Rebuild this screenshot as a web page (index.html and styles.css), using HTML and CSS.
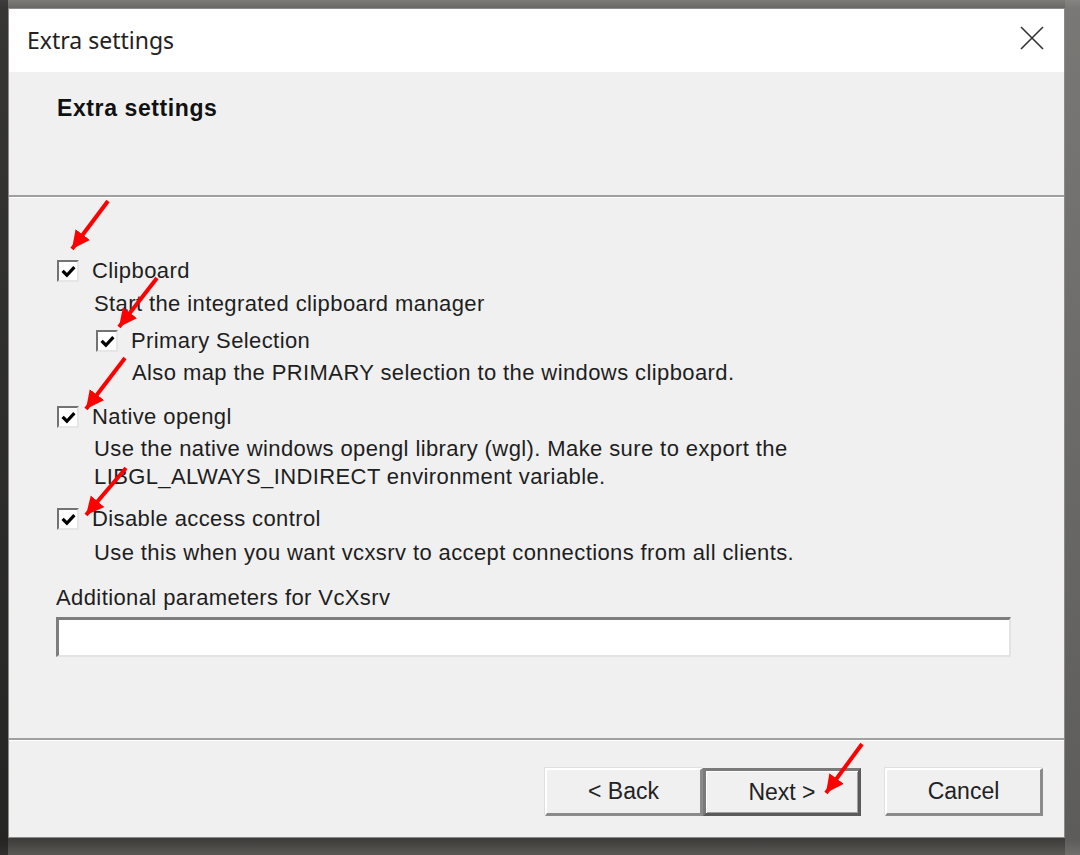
FILE: index.html
```html
<!DOCTYPE html>
<html>
<head>
<meta charset="utf-8">
<title>Extra settings</title>
<link rel="stylesheet" href="styles.css">
</head>
<body>
<div class="desktop">
  <div class="window">
    <div class="titlebar">
      <span class="title">Extra settings</span>
      <svg class="close" width="24" height="24" viewBox="0 0 24 24"><path d="M1 1 L23 23 M23 1 L1 23" stroke="#333" stroke-width="1.6" fill="none"/></svg>
    </div>
    <div class="header">
      <div class="header-title">Extra settings</div>
    </div>
    <div class="sep"></div>
    <div class="content">
      <div class="opt r1"><span class="cb"><svg viewBox="0 0 14 14" width="15" height="15"><path d="M1.5 6.5 L5.5 10.5 L12.5 3" stroke="#000" stroke-width="3" fill="none"/></svg></span><span>Clipboard</span></div>
      <div class="desc d1">Start the integrated clipboard manager</div>
      <div class="opt sub r2"><span class="cb"><svg viewBox="0 0 14 14" width="15" height="15"><path d="M1.5 6.5 L5.5 10.5 L12.5 3" stroke="#000" stroke-width="3" fill="none"/></svg></span><span>Primary Selection</span></div>
      <div class="desc sub2 d2">Also map the PRIMARY selection to the windows clipboard.</div>
      <div class="opt r3"><span class="cb"><svg viewBox="0 0 14 14" width="15" height="15"><path d="M1.5 6.5 L5.5 10.5 L12.5 3" stroke="#000" stroke-width="3" fill="none"/></svg></span><span>Native opengl</span></div>
      <div class="desc d3">Use the native windows opengl library (wgl). Make sure to export the<br>LIBGL_ALWAYS_INDIRECT environment variable.</div>
      <div class="opt r4"><span class="cb"><svg viewBox="0 0 14 14" width="15" height="15"><path d="M1.5 6.5 L5.5 10.5 L12.5 3" stroke="#000" stroke-width="3" fill="none"/></svg></span><span>Disable access control</span></div>
      <div class="desc d4">Use this when you want vcxsrv to accept connections from all clients.</div>
      <div class="field-label">Additional parameters for VcXsrv</div>
      <div class="field"></div>
    </div>
    <div class="sep"></div>
    <div class="footer">
      <div class="btn">&lt; Back</div>
      <div class="btn default">Next &gt;</div>
      <div class="btn cancel">Cancel</div>
    </div>
  </div>
  <svg class="arrows" width="1080" height="855" viewBox="0 0 1080 855">
    <defs>
      <marker id="ah" markerUnits="userSpaceOnUse" markerWidth="22" markerHeight="22" refX="18" refY="9" orient="auto">
        <path d="M0 0 L18 9 L0 18 Z" fill="#ff0000"/>
      </marker>
    </defs>
    <g stroke="#ff0000" stroke-width="4" fill="none">
      <line x1="108" y1="201" x2="72" y2="249" marker-end="url(#ah)"/>
      <line x1="157" y1="278" x2="119" y2="327" marker-end="url(#ah)"/>
      <line x1="125" y1="358" x2="86" y2="409" marker-end="url(#ah)"/>
      <line x1="126" y1="468" x2="86" y2="515" marker-end="url(#ah)"/>
      <line x1="862" y1="744" x2="826" y2="793" marker-end="url(#ah)"/>
    </g>
  </svg>
</div>
</body>
</html>
```

FILE: styles.css
```css
html, body {
  margin: 0;
  padding: 0;
}
body {
  width: 1080px;
  height: 855px;
  overflow: hidden;
  background: #4a4a4a;
}
.desktop {
  position: relative;
  width: 1080px;
  height: 855px;
  padding: 8px 0 0 8px;
  box-sizing: border-box;
  background:
    linear-gradient(90deg, rgba(20,20,20,0.6) 0px, rgba(20,20,20,0.6) 8px, transparent 8px, transparent 1065px, rgba(150,150,150,0.35) 1065px),
    linear-gradient(180deg, #7d7b78 0px, #6a6864 8px, #3e3d3b 840px, #5a5955 855px);
}
.window {
  width: 1057px;
  height: 830px;
  box-sizing: border-box;
  border: 1px solid #8a8a8a;
  background: #f0f0f0;
  display: flex;
  flex-direction: column;
  font-family: "Liberation Sans", Arial, sans-serif;
  color: #1e1e1e;
}
.titlebar {
  height: 63px;
  background: #ffffff;
  display: flex;
  align-items: center;
  justify-content: space-between;
  padding: 0 20px 0 18px;
  flex-shrink: 0;
}
.title {
  font-family: "Noto Sans", "Open Sans", sans-serif;
  font-size: 23px;
  color: #222;
  margin-top: -2px;
}
.close {
  margin-top: -6px;
}
.header {
  height: 123px;
  flex-shrink: 0;
  padding: 22px 0 0 48px;
  box-sizing: border-box;
}
.header-title {
  font-weight: bold;
  font-size: 23px;
  letter-spacing: 0.6px;
  line-height: 28px;
  color: #111;
}
.sep {
  height: 2px;
  background: #a0a0a0;
  border-bottom: 1px solid #ffffff;
  flex-shrink: 0;
}
.content {
  height: 540px;
  flex-shrink: 0;
  box-sizing: border-box;
  padding: 61px 0 0 48px;
  font-size: 22px;
  letter-spacing: 0.4px;
}
.opt {
  display: flex;
  align-items: center;
  gap: 13px;
  height: 24px;
}
.opt.sub {
  margin-left: 39px;
}
.cb {
  width: 18px;
  height: 18px;
  background: #ffffff;
  border-top: 2px solid #737373;
  border-left: 2px solid #737373;
  border-right: 2px solid #e6e6e6;
  border-bottom: 2px solid #e6e6e6;
  display: flex;
  align-items: center;
  justify-content: center;
}
.desc {
  margin-left: 37px;
  line-height: 28px;
}
.desc.sub2 {
  margin-left: 75px;
}
.d1 { margin-top: 7px; }
.r2 { margin-top: 11px; }
.d2 { margin-top: 6px; }
.r3 { margin-top: 18px; }
.d3 { margin-top: 6px; }
.r4 { margin-top: 16px; }
.d4 { margin-top: 8px; }
.field-label {
  margin-top: 17px;
  margin-left: -1px;
  line-height: 28px;
}
.field {
  margin-top: 5px;
  margin-left: -1px;
  width: 955px;
  height: 40px;
  box-sizing: border-box;
  background: #ffffff;
  border-top: 3px solid #7d7d7d;
  border-left: 3px solid #7d7d7d;
  border-right: 2px solid #e3e3e3;
  border-bottom: 2px solid #e3e3e3;
}
.footer {
  flex: 1;
  display: flex;
  align-items: flex-start;
  justify-content: flex-end;
  padding: 27px 21px 0 0;
  box-sizing: border-box;
}
.btn {
  width: 158px;
  height: 48px;
  box-sizing: border-box;
  background: #f0f0f0;
  border-top: 2px solid #ffffff;
  border-left: 2px solid #ffffff;
  border-right: 3px solid #8a8a8a;
  border-bottom: 3px solid #8a8a8a;
  box-shadow: -1px -1px 0 #e0e0e0;
  font-size: 23px;
  display: flex;
  align-items: center;
  justify-content: center;
  color: #222;
}
.btn.default {
  border: 3px solid #5a5a5a;
  border-top-color: #7a7a7a;
  border-left-color: #7a7a7a;
  box-shadow: inset 1px 1px 0 #ffffff, inset -1px -1px 0 #a0a0a0;
}
.btn.cancel {
  margin-left: 24px;
}
.arrows {
  position: absolute;
  left: 0;
  top: 0;
  pointer-events: none;
}
```
